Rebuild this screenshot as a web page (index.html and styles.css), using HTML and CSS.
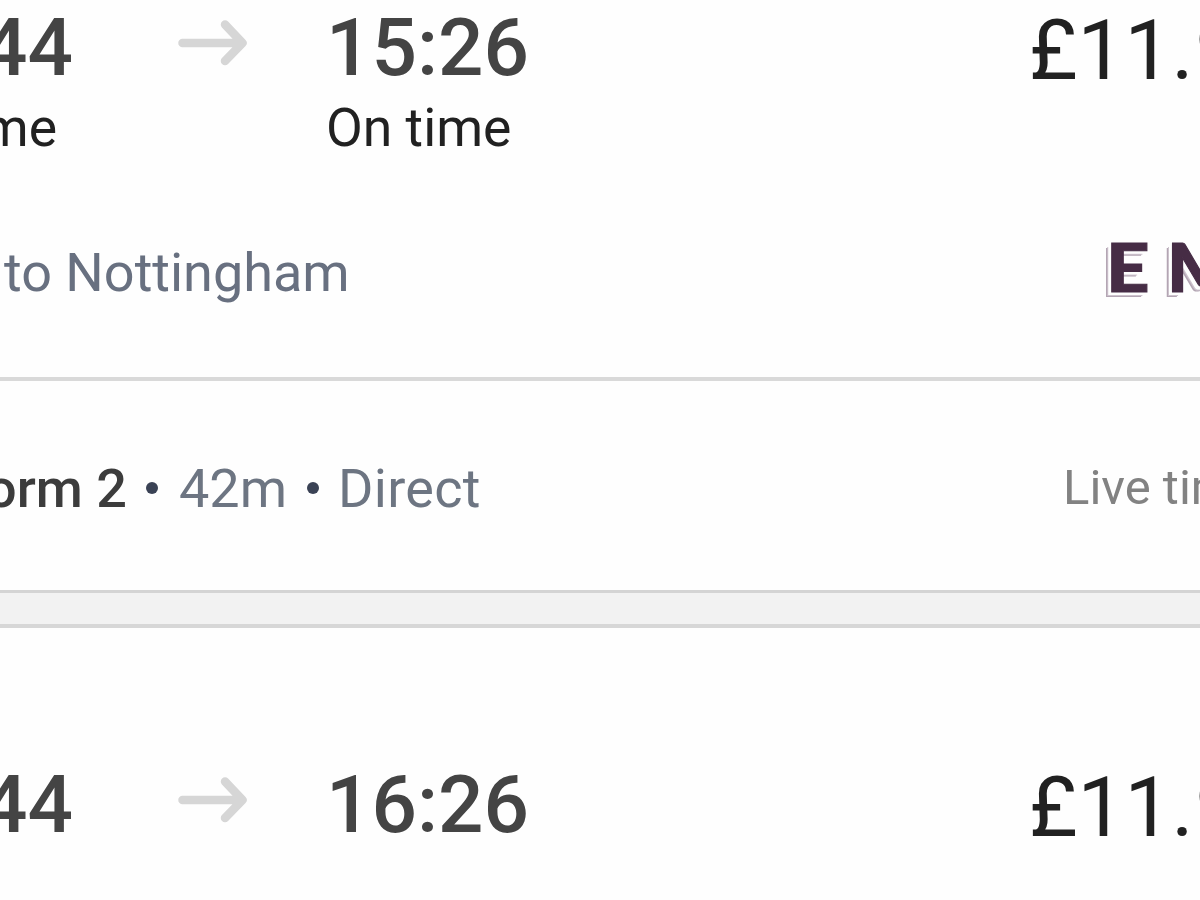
FILE: index.html
```
<!DOCTYPE html>
<html lang="en">
<head>
    <meta charset="UTF-8">
    <meta name="viewport" content="width=device-width, initial-scale=1.0">
    <title>Train times</title>
    <link rel="stylesheet" href="styles.css">
</head>
<body>
    <main class="results">
        <!-- 14:44 service -->
        <article class="card card-first">
            <div class="journey">
                <div class="stop departure">
                    <div class="time">14:44</div>
                    <div class="status">On time</div>
                </div>
                <svg class="arrow" viewBox="0 0 70 46" width="70" height="46">
                    <path d="M4.500 23H62M47 4.500L64.500 23L47 41"/>
                </svg>
                <div class="stop">
                    <div class="time">15:26</div>
                    <div class="status">On time</div>
                </div>
                <div class="price">£11.<span class="pence">90</span></div>
            </div>
            <div class="service">
                <div class="destination">to Nottingham</div>
                <div class="operator">EM</div>
            </div>
            <div class="details">
                <div class="platform"><span>Platform 2</span></div>
                <span class="dot"></span>
                <span class="duration">42m</span>
                <span class="dot"></span>
                <span class="changes">Direct</span>
                <div class="live">Live times</div>
            </div>
        </article>

        <!-- 15:44 service -->
        <article class="card">
            <div class="journey">
                <div class="stop departure">
                    <div class="time">15:44</div>
                </div>
                <svg class="arrow" viewBox="0 0 70 46" width="70" height="46">
                    <path d="M4.500 23H62M47 4.500L64.500 23L47 41"/>
                </svg>
                <div class="stop">
                    <div class="time">16:26</div>
                </div>
                <div class="price">£11.<span class="pence">90</span></div>
            </div>
        </article>
    </main>
</body>
</html>
```
FILE: styles.css
```
/* Base */
* {
    margin: 0;
    padding: 0;
    box-sizing: border-box;
}
body {
    background-color: #f2f2f2;
    color: #212121;
    font-family: Roboto, Arial, sans-serif;
    height: 900px;
    overflow: hidden;
}

/* Cards */
.results {
    display: flex;
    flex-direction: column;
    gap: 31px;
    height: 900px;
}
.card {
    background-color: #fefefe;
    border-top: 4px solid #d7d7d7;
    padding-top: 137px;
    flex: 1;
    min-height: 0;
    overflow: hidden;
}
.card-first {
    border-top: none;
    border-bottom: 3px solid #d4d4d4;
    padding-top: 8px;
    flex: 0 0 593px;
}

/* Times and price */
.journey {
    display: grid;
    grid-template-columns: 73px 105px 148px 703px auto;
    height: 235px;
}
.card:not(.card-first) .journey {
    height: 130px;
}
.departure {
    display: flex;
    flex-direction: column;
    align-items: flex-end;
}
.arrow {
    grid-column: 3;
    margin-top: 12px;
    fill: none;
    stroke: #d6d6d6;
    stroke-width: 8.5;
    stroke-linecap: round;
    stroke-linejoin: round;
}
.card:not(.card-first) .arrow {
    margin-top: 12px;
}
.time {
    font-size: 80px;
    line-height: 80px;
    font-weight: 500;
    color: #444;
    white-space: nowrap;
}
.status {
    font-size: 53.5px;
    line-height: 60px;
    margin-top: 10px;
    white-space: nowrap;
}
.departure .status {
    margin-right: 16px;
}
.price {
    font-size: 83.5px;
    line-height: 85px;
    white-space: nowrap;
}
.pence {
    margin-left: 2px;
}

/* Destination and operator */
.service {
    display: flex;
    justify-content: space-between;
    height: 138px;
    padding-left: 4px;
    border-bottom: 4px solid #d9d9d9;
}
.destination {
    font-size: 54px;
    line-height: 60px;
    color: #687080;
}
.operator {
    width: 94px;
    font-family: Lato, sans-serif;
    font-size: 66px;
    line-height: 48px;
    font-weight: 900;
    letter-spacing: 15px;
    color: #462c45;
    white-space: nowrap;
    -webkit-text-stroke: 1px #462c45;
    text-shadow: -1px 1px #fefefe, -2px 2px #fefefe, -3px 3px #fefefe, -4px 4px #cdc3cd, -5px 5px #b3a5b3;
    transform: scaleX(1.15);
    transform-origin: left;
}

/* Platform, duration, changes */
.details {
    display: flex;
    height: 209px;
    padding-top: 78px;
    font-size: 54px;
    line-height: 60px;
    color: #6d7582;
}
.platform {
    display: flex;
    justify-content: flex-end;
    width: 127px;
    font-weight: 500;
    color: #3c3c3c;
    white-space: nowrap;
}
.dot {
    width: 12px;
    height: 12px;
    margin: 23px 0 0 19px;
    border-radius: 50%;
    background-color: #3a4255;
}
.duration {
    width: 110px;
    margin-left: 21px;
}
.changes {
    margin-left: 19px;
    letter-spacing: 0.3px;
}
.duration + .dot {
    margin-left: 18px;
}
.live {
    width: 137px;
    margin-left: auto;
    font-size: 49px;
    line-height: 58px;
    color: #828282;
    white-space: nowrap;
}
```
